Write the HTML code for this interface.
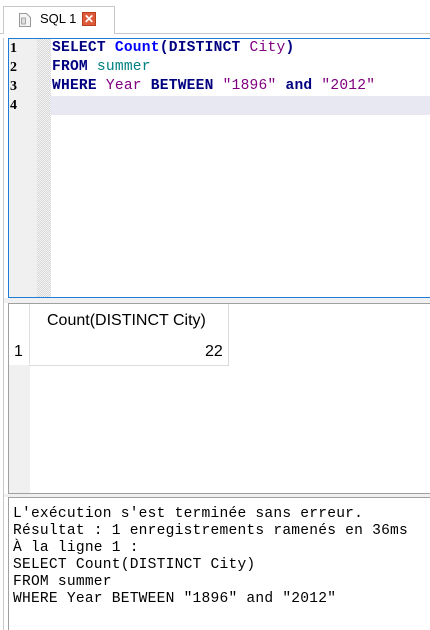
<!DOCTYPE html>
<html><head><style>
*{margin:0;padding:0;box-sizing:border-box}
body{width:430px;height:630px;background:#fff;position:relative;overflow:hidden;font-family:"Liberation Sans",sans-serif}
.abs{position:absolute}
.mono{font-family:"Liberation Mono","Courier New",monospace;font-size:14.6px;white-space:pre;letter-spacing:0.22px}
</style></head><body>
<div class="abs" style="left:3px;top:33px;width:1px;height:597px;background:#c8c8c8"></div>
<div class="abs" style="left:0;top:33px;width:430px;height:1px;background:#c8c8c8"></div>
<div class="abs" style="left:3px;top:6px;width:112px;height:28px;background:#fff;border:1px solid #c8c8c8;border-bottom:none"></div>
<svg class="abs" style="left:18px;top:12px" width="14" height="16" viewBox="0 0 14 16"><path d="M1.5 1.5h7l4 4v9h-11z" fill="#f4f4f4" stroke="#999"/><rect x="3.5" y="6" width="4" height="6" fill="#ddd" stroke="#999" stroke-width=".8"/></svg>
<div class="abs" style="left:40px;top:11px;font-size:13px;color:#000">SQL 1</div>
<div class="abs" style="left:82px;top:12px;width:14px;height:14px;background:#e05a3a;border:1px solid #b84020;color:#fff;font-size:12px;line-height:12px;text-align:center;font-weight:bold">✕</div>
<div class="abs" style="left:0;top:34px;width:430px;height:4px;background:#fff"></div>
<div class="abs" style="left:8px;top:38px;width:422px;height:260px;border:1px solid #1c7dd6;border-right:none;background:#fff"></div>
<div class="abs" style="left:9px;top:39px;width:28px;height:258px;background:#f0f0f0"></div>
<div class="abs" style="left:37px;top:39px;width:14px;height:258px;background-color:#f0f0f0;background-image:repeating-conic-gradient(#d8d8d8 0 25%,#f4f4f4 0 50%);background-size:2px 2px"></div>
<div class="abs" style="left:51px;top:96px;width:379px;height:19px;background:#e8e8f2"></div>
<div class="abs" style="left:10px;top:39px;line-height:19px;color:#000;font-size:14px;font-family:'Liberation Serif',serif;white-space:pre;font-weight:bold">1
2
3
4</div>
<div class="abs mono" style="left:52px;top:39px;line-height:19px;font-weight:bold;color:#000080">SELECT <span style="color:#0000ff">Count</span>(DISTINCT <span style="color:#800080;font-weight:normal">City</span>)
FROM <span style="color:#008080;font-weight:normal">summer</span>
WHERE <span style="color:#800080;font-weight:normal">Year</span> BETWEEN <span style="color:#800080;font-weight:normal">"1896"</span> and <span style="color:#800080;font-weight:normal">"2012"</span></div>
<div class="abs" style="left:4px;top:298px;width:426px;height:5px;background:#f0f0f0"></div>
<div class="abs" style="left:8px;top:303px;width:422px;height:191px;border-top:1px solid #a0a0a0;border-left:1px solid #a0a0a0;border-bottom:1px solid #a0a0a0;background:#fff"></div>
<div class="abs" style="left:9px;top:304px;width:21px;height:189px;background:#f0f0f0"></div>
<div class="abs" style="left:9px;top:304px;width:220px;height:34px;background:#fff"></div>
<div class="abs" style="left:9px;top:338px;width:21px;height:27px;background:#fff"></div>
<div class="abs" style="left:29px;top:304px;width:1px;height:62px;background:#e0e0e0"></div>
<div class="abs" style="left:228px;top:304px;width:1px;height:62px;background:#dcdcdc"></div>
<div class="abs" style="left:29px;top:365px;width:200px;height:1px;background:#dcdcdc"></div>
<div class="abs" style="left:47px;top:312px;font-size:16px;color:#000">Count(DISTINCT City)</div>
<div class="abs" style="left:14px;top:343px;font-size:16px;color:#000">1</div>
<div class="abs" style="left:205px;top:343px;font-size:16px;color:#000">22</div>
<div class="abs" style="left:4px;top:494px;width:426px;height:3px;background:#f0f0f0"></div>
<div class="abs" style="left:8px;top:497px;width:422px;height:133px;border-top:1px solid #a0a0a0;border-left:1px solid #a0a0a0;background:#fff"></div>
<div class="abs mono" style="left:13px;top:506px;line-height:17px;color:#000">L'exécution s'est terminée sans erreur.
Résultat : 1 enregistrements ramenés en 36ms
À la ligne 1 :
SELECT Count(DISTINCT City)
FROM summer
WHERE Year BETWEEN "1896" and "2012"</div>
</body></html>
